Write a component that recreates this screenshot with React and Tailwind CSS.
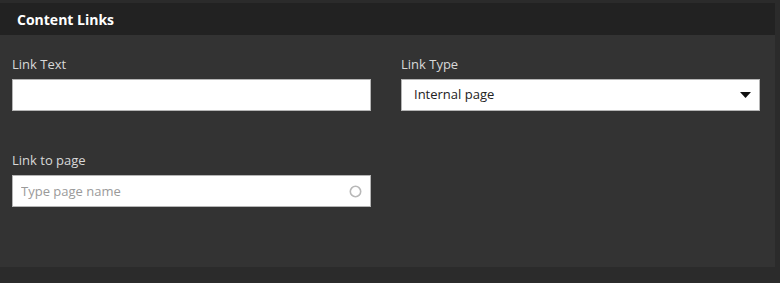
import React, { useState } from 'react';

const font = { fontFamily: '"Open Sans", "Noto Sans", sans-serif' };

const Field = ({ label, children }) => (
    <div className='flex flex-col'>
        <label className='text-[13px] leading-[18px] text-[#d8d8d8] mb-[6px]'>{label}</label>
        {children}
    </div>
);

export default function App() {
    const [linkText, setLinkText] = useState('')
    const [page, setPage] = useState('')

    return (
        <div className='w-[780px] h-[283px] bg-[#2b2b2b] pt-[3px] overflow-hidden' style={font}>
            <div className='w-[775px] h-[264px] bg-[#333333] flex flex-col'>
                <div className='h-[32px] bg-[#222222] flex items-center pl-[17px]'>
                    <span className='text-[14px] font-bold text-white'>Content Links</span>
                </div>
                <div className='grid grid-cols-[359px_359px] gap-x-[30px] gap-y-[40px] pl-[12px] pt-[20px]'>
                    <Field label='Link Text'>
                        <input
                            value={linkText}
                            onChange={(e) => setLinkText(e.target.value)}
                            className='h-[32px] bg-white border border-[#b5b5b5] outline-none px-[9px] text-[13px] text-[#333]'
                        />
                    </Field>
                    <Field label='Link Type'>
                        <div className='h-[32px] bg-white border border-[#b5b5b5] flex items-center justify-between pl-[12px] pr-[8px]'>
                            <span className='text-[13px] text-[#222]'>Internal page</span>
                            <svg width='11' height='6' viewBox='0 0 11 6'>
                                <path d='M0 0 L11 0 L5.5 6 Z' fill='#111' />
                            </svg>
                        </div>
                    </Field>
                    <Field label='Link to page'>
                        <div className='h-[32px] bg-white border border-[#b5b5b5] flex items-center pr-[8px]'>
                            <input
                                value={page}
                                onChange={(e) => setPage(e.target.value)}
                                placeholder='Type page name'
                                className='flex-1 h-full outline-none px-[8px] text-[13px] text-[#333] placeholder:text-[#9a9a9a]'
                            />
                            <svg width='13' height='13' viewBox='0 0 13 13'>
                                <circle cx='6.5' cy='6.5' r='5.2' fill='none' stroke='#b8b8b8' strokeWidth='1.6' />
                            </svg>
                        </div>
                    </Field>
                </div>
            </div>
        </div>
    );
}
